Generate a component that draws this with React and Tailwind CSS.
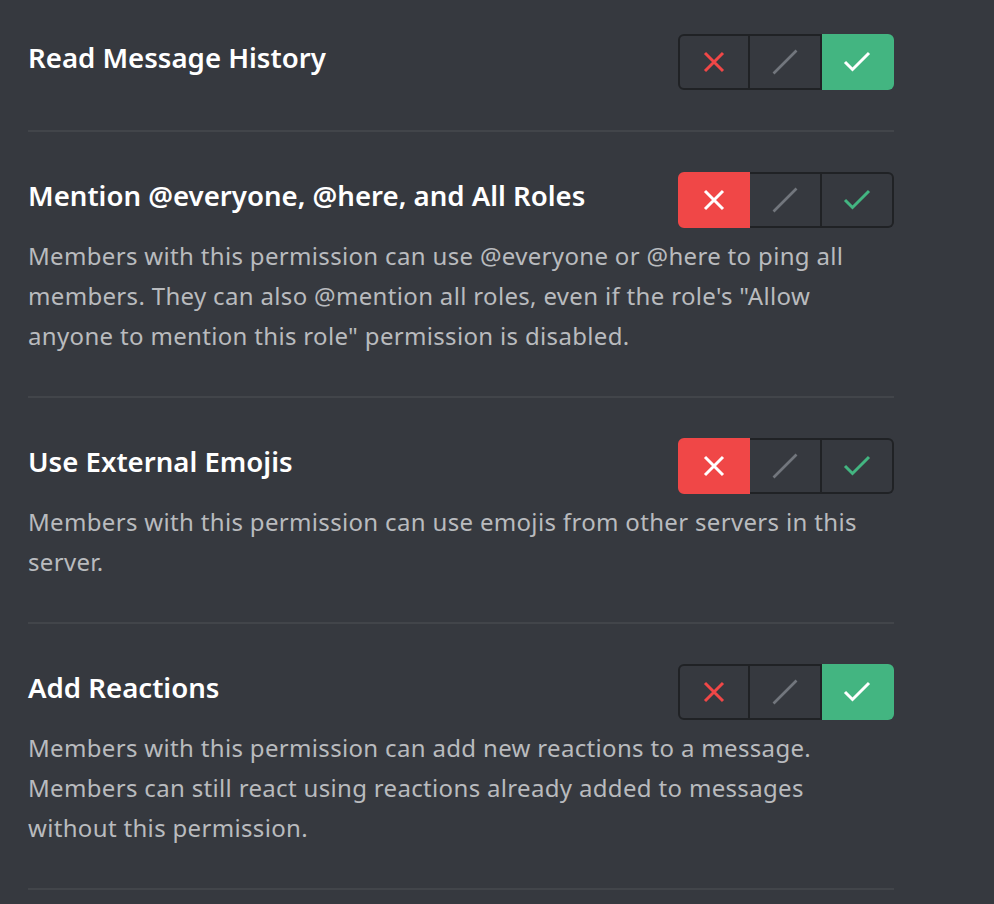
import React from "react";

const FONT = { fontFamily: "'Noto Sans', Lato, sans-serif" };

function XIcon({ color }) {
    return (
        <svg width="22" height="22" viewBox="0 0 22 22">
            <path d="M2 2 L20 20 M20 2 L2 20" stroke={color} strokeWidth="3" fill="none" />
        </svg>
    );
}

function SlashIcon() {
    return (
        <svg width="26" height="26" viewBox="0 0 26 26">
            <path d="M1.5 24.5 L24.5 1.5" stroke="#72767d" strokeWidth="2.6" fill="none" />
        </svg>
    );
}

function CheckIcon({ color }) {
    return (
        <svg width="28" height="22" viewBox="0 0 28 22">
            <path d="M2 11 L9.5 18.5 L26 2" stroke={color} strokeWidth="3" fill="none" />
        </svg>
    );
}

function Toggle({ value }) {
    const deny = value === "deny";
    const allow = value === "allow";
    return (
        <div className="flex h-14 w-[216px] shrink-0">
            <div
                className={
                    "flex w-[72px] items-center justify-center rounded-l-[6px] border-2 " +
                    (deny ? "border-[#f04747] bg-[#f04747]" : "border-[#202225]")
                }
            >
                <XIcon color={deny ? "#ffffff" : "#f04747"} />
            </div>
            <div className="flex w-[72px] items-center justify-center border-y-2 border-r-2 border-[#202225]">
                <SlashIcon />
            </div>
            <div
                className={
                    "flex w-[72px] items-center justify-center rounded-r-[6px] border-y-2 border-r-2 " +
                    (allow ? "border-[#43b581] bg-[#43b581]" : "border-[#202225]")
                }
            >
                <CheckIcon color={allow ? "#ffffff" : "#43b581"} />
            </div>
        </div>
    );
}

function Permission({ title, lines, value }) {
    return (
        <div className="border-b-2 border-[#42454a] pb-10 pt-10 first:pt-0">
            <div className="flex h-14 items-center justify-between">
                <h3 className="pb-[9px] text-[27.6px] font-semibold text-white">{title}</h3>
                <Toggle value={value} />
            </div>
            {lines && (
                <p className="mt-2 text-[24px] leading-[40px] tracking-[0.33px] text-[#b9bbbe]">
                    {lines.map((l, i) => (
                        <span key={i} className="block whitespace-nowrap">
                            {l}
                        </span>
                    ))}
                </p>
            )}
        </div>
    );
}

const permissions = [
    { title: "Read Message History", value: "allow" },
    {
        title: "Mention @everyone, @here, and All Roles",
        value: "deny",
        lines: [
            "Members with this permission can use @everyone or @here to ping all",
            "members. They can also @mention all roles, even if the role's \"Allow",
            "anyone to mention this role\" permission is disabled.",
        ],
    },
    {
        title: "Use External Emojis",
        value: "deny",
        lines: [
            "Members with this permission can use emojis from other servers in this",
            "server.",
        ],
    },
    {
        title: "Add Reactions",
        value: "allow",
        lines: [
            "Members with this permission can add new reactions to a message.",
            "Members can still react using reactions already added to messages",
            "without this permission.",
        ],
    },
];

export default function App() {
    return (
        <div className="min-h-[904px] w-full overflow-hidden bg-[#36393f]" style={FONT}>
            <div className="ml-[28px] w-[866px] pt-[34px]">
                {permissions.map((p) => (
                    <Permission key={p.title} {...p} />
                ))}
            </div>
        </div>
    );
}
